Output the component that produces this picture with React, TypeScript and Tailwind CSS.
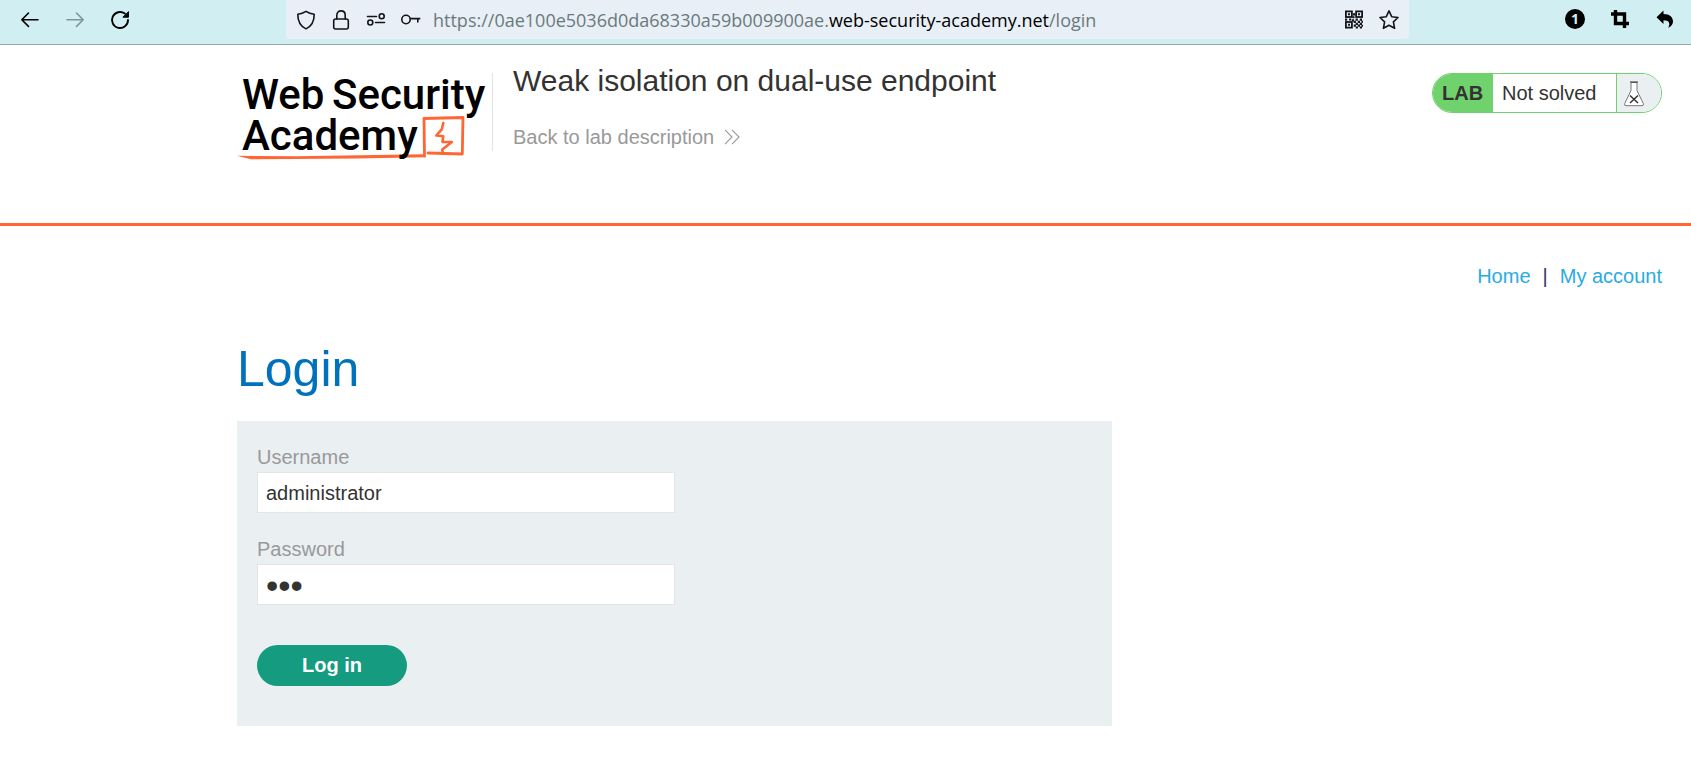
import type { ReactNode } from "react";

function ToolIcon({ label, children, className = "" }: { label: string; children: ReactNode; className?: string }) {
  return (
    <button type="button" aria-label={label} className={"flex h-5 w-5 shrink-0 items-center justify-center " + className}>
      <svg width="20" height="20" viewBox="0 0 20 20" fill="none" stroke="currentColor" strokeWidth="1.6" strokeLinecap="round" strokeLinejoin="round" aria-hidden="true">
        {children}
      </svg>
    </button>
  );
}

function BrowserBar() {
  return (
    <div className="flex h-[45px] items-start border-b border-[#93a9aa] bg-[#d1eef2] text-black">
      <div className="flex w-[286px] shrink-0 gap-[25px] pl-5 pt-[10px]">
        <ToolIcon label="Back">
          <path d="M18 9.700H2M8.500 3L1.800 9.700L8.500 16.400" />
        </ToolIcon>
        <ToolIcon label="Forward" className="text-[#829596]">
          <path d="M2 9.700H18M11.500 3L18.200 9.700L11.500 16.400" />
        </ToolIcon>
        <ToolIcon label="Reload">
          <path d="M14.800 3.600A8 8 0 1 0 18 10" strokeWidth="1.900" />
          <path d="M18.500 2V7.200H13.300Z" fill="currentColor" strokeWidth="1" />
        </ToolIcon>
      </div>
      <div className="flex h-[39px] min-w-0 flex-1 items-center rounded-b bg-[#e8eff6] px-[10px] text-[#15141a]">
        <div className="flex shrink-0 gap-[15px]">
          <ToolIcon label="Tracking protection">
            <path d="M10 1.300C12.500 3 15.200 3.900 18.200 4.200C18.300 11 15.800 16 10 18.900C4.200 16 1.700 11 1.800 4.200C4.800 3.900 7.500 3 10 1.300Z" />
          </ToolIcon>
          <ToolIcon label="Connection secure">
            <rect x="2.700" y="9" width="14.600" height="10" rx="2" />
            <path d="M5.800 9V5.200C5.800 2.600 7.600 .9 10 .9S14.200 2.600 14.200 5.200V9" />
          </ToolIcon>
          <ToolIcon label="Permissions">
            <path d="M1.500 6.500H10.500M9.500 12.500H18.500" />
            <circle cx="15.700" cy="6.300" r="2.500" />
            <circle cx="4.300" cy="12.500" r="2.500" />
          </ToolIcon>
          <ToolIcon label="Saved logins">
            <circle cx="5" cy="9.500" r="4.200" />
            <path d="M9.300 8.600H19.300M16.800 8.800V12.500" strokeLinecap="butt" />
          </ToolIcon>
        </div>
        <div className="ml-3 min-w-0 flex-1 truncate font-['Open_Sans','Noto_Sans',sans-serif] text-[18px] leading-6 text-[#6b7a7b]">
          https://0ae100e5036d0da68330a59b009900ae.<span className="text-black">web-security-academy.net</span>/login
        </div>
        <div className="flex shrink-0 gap-[15px]">
          <ToolIcon label="QR code">
            <g strokeLinejoin="miter" strokeWidth="1.800">
              <rect x="1.900" y="1.400" width="6" height="5.600" />
              <rect x="12.100" y="1.400" width="6" height="5.600" />
              <rect x="1.900" y="12" width="6" height="5.600" />
            </g>
            <path d="M4 3.200h2v2h-2zM14 3.200h2v2h-2zM4 13.800h2v2h-2zM9 3.200h2.200v2.200h-2.200zM8.500 6.200h2v2h-2zM1 8.500h2.200v2.200h-2.200zM5 8.500h2.200v2h-2.200zM7.800 9.200h2.200v2.200h-2.200zM11.600 8.500h2.200v2.200h-2.200zM15.800 8.500h2.200v2.200h-2.200zM9.700 10.700h2.200v2.200h-2.200zM13.800 10.700h2.200v2.200h-2.200zM17.400 10.700h1.600v2h-1.600zM11.700 12.800h2.200v2.200h-2.200zM15.800 12.800h2.200v2.200h-2.200zM9.700 14.600h2.200v2.200h-2.200zM13.800 14.600h2.200v2.200h-2.200zM17.400 14.800h1.600v2h-1.600zM11.700 16.600h2.200v2h-2.200zM15.800 16.600h2.200v2h-2.200z" fill="currentColor" stroke="none" />
          </ToolIcon>
          <ToolIcon label="Bookmark this page">
            <path d="M10 .9L12.700 6.700L19 7.500L14.400 11.900L15.600 18.300L10 15.300L4.400 18.300L5.600 11.900L1 7.500L7.300 6.700Z" />
          </ToolIcon>
        </div>
      </div>
      <div className="flex w-[282px] shrink-0 justify-end gap-[25px] pr-4 pt-[9px]">
        <button type="button" className="flex h-5 w-5 items-center justify-center rounded-full bg-black font-['Open_Sans',sans-serif] text-[14px] font-bold leading-5 text-[#d1eef2]">
          1
        </button>
        <ToolIcon label="Crop">
          <path d="M1 5H14.500V19M5.500 1V14.500H19" strokeWidth="3.400" strokeLinecap="butt" strokeLinejoin="miter" />
        </ToolIcon>
        <ToolIcon label="Undo">
          <path d="M8.500 1.500V5C15 5 18 8.500 18 12.500C18 15.300 16 17.800 13.300 18.800C15.600 14 14 11.300 8.500 11.300V15L1.500 8.200Z" fill="currentColor" stroke="none" />
        </ToolIcon>
      </div>
    </div>
  );
}

function AcademyLogo() {
  return (
    <svg width="250" height="100" viewBox="0 0 250 100" role="img" aria-label="Web Security Academy" className="shrink-0">
      <g fill="none" stroke="#ff6633" strokeLinecap="round" strokeLinejoin="round" strokeWidth="2.800">
        <path d="M187.500 87L187 49.500L226 48.500L225.300 85L191 84" />
        <path d="M206.300 54L204.800 60.300L199.300 66.500L206.300 67.300L205.500 73L214.800 73L205.300 80.500L206 84.800" strokeWidth="2.600" />
      </g>
      <path d="M0 86.800L60 87.200L187 85.300L188.900 88.300L120 89.500L14 90.200Z" fill="#ff6633" />
      <g className="font-['Roboto',sans-serif] text-[42px] font-medium" fill="#000">
        <text x="5" y="40">Web</text>
        <text x="95" y="40">Security</text>
        <text x="5" y="81">Academy</text>
      </g>
    </svg>
  );
}

function LabStatus() {
  return (
    <div className="flex h-10 shrink-0 overflow-hidden rounded-[20px] border border-[#6fd26c] bg-white text-[20px] leading-[38px] text-[#333332]">
      <span className="w-[60px] bg-[#6fd26c] pl-[9px] font-bold">LAB</span>
      <p className="w-[123px] pl-[9px]">Not solved</p>
      <span className="flex w-[45px] items-center border-l border-[#6fd26c] bg-[#eaeff2] pl-[7px] pt-[2px]">
        <svg width="20" height="26" viewBox="0 0 20 26" fill="none" stroke="#333332" strokeWidth="1" aria-hidden="true">
          <path d="M7 1.500V9.500L.7 22.500Q0 24.700 2 24.700H18Q20 24.700 19.300 22.500L13 9.500V1.500Z" fill="#fff" stroke="#777" />
          <path d="M6 1H14" strokeWidth="1.200" />
          <path d="M6 14.500L14 22M14 14.500L6 22" strokeWidth="1.500" />
        </svg>
      </span>
    </div>
  );
}

function Field({ id, label, type, value, className }: { id: string; label: string; type: string; value: string; className: string }) {
  return (
    <div>
      <label htmlFor={id} className="block leading-6 text-[#999999]">{label}</label>
      <input
        id={id}
        name={id}
        type={type}
        defaultValue={value}
        className={"mt-[3px] block h-[41px] w-[418px] max-w-full border border-[#e4e4e4] bg-white px-2 text-[#333332] outline-none " + className}
      />
    </div>
  );
}

export default function App() {
  return (
    <div className="bg-white font-['Liberation_Sans',Arial,sans-serif] text-[20px] text-[#333332]">
      <BrowserBar />
      <header className="flex h-[181px] items-start border-b-[3px] border-[#ff6633] pl-[237px] pr-[29px] pt-7">
        <div className="-mt-1 flex">
          <AcademyLogo />
        </div>
        <div className="ml-[5px] h-[78px] border-l border-[#e4e4e4]" />
        <div className="-mt-3 ml-5 flex-1">
          <h2 className="text-[30px] leading-10">Weak isolation on dual-use endpoint</h2>
          <a href="#lab" className="mt-6 flex items-center gap-[10px] leading-6 text-[#999999]">
            Back to lab description
            <svg width="16" height="16" viewBox="0 0 16 16" fill="none" stroke="#999" strokeWidth="1.100" aria-hidden="true">
              <path d="M1 .8L8 8L1 15.200M8 .8L15 8L8 15.200" />
            </svg>
          </a>
        </div>
        <LabStatus />
      </header>
      <main className="pb-[58px] pl-[237px] pr-[29px]">
        <nav className="flex justify-end gap-3 pt-[38px] leading-6">
          <a href="#home" className="text-[#29abe2]">Home</a>
          <span className="text-[#333366]">|</span>
          <a href="#account" className="text-[#29abe2]">My account</a>
        </nav>
        <h1 className="mt-[51px] text-[50px] leading-[60px] text-[#0071bd]">Login</h1>
        <form className="mt-[22px] w-[875px] max-w-full bg-[#eaeff2] px-5 pb-10 pt-6" onSubmit={(e) => e.preventDefault()}>
          <div className="flex flex-col gap-6">
            <Field id="username" label="Username" type="text" value="administrator" className="pt-[2px] text-[20px]" />
            <Field id="password" label="Password" type="password" value="abc" className="pt-1 text-[35px]" />
          </div>
          <button type="submit" className="mt-10 h-[41px] w-[150px] rounded-full bg-[#159b7f] pb-[2px] font-bold text-white">
            Log in
          </button>
        </form>
      </main>
    </div>
  );
}
